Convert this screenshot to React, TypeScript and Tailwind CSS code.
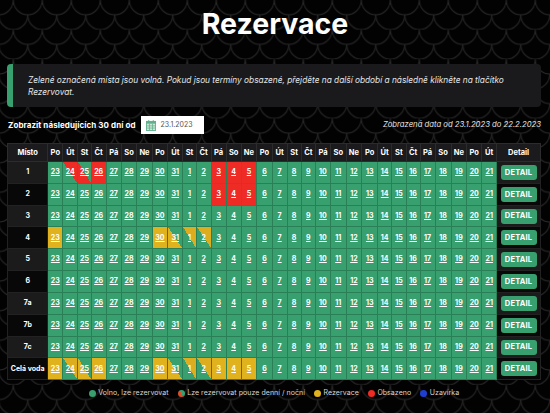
const dayNames = ["Po", "Út", "St", "Čt", "Pá", "So", "Ne"];
const days = [
	23, 24, 25, 26, 27, 28, 29, 30, 31, 1, 2, 3, 4, 5, 6, 7, 8, 9, 10, 11, 12, 13,
	14, 15, 16, 17, 18, 19, 20, 21,
];

const cellStyles: { [key: string]: string } = {
	free: "bg-[#38a06f]",
	gold: "bg-[#e0b21e]",
	red: "bg-[#ee2b24]",
	goldUp: "bg-[linear-gradient(to_top_right,#38a06f_50%,#dcae1f_50%)]",
	goldDown: "bg-[linear-gradient(to_bottom_left,#38a06f_50%,#e0b21e_50%)]",
	redUp: "bg-[linear-gradient(to_top_right,#38a06f_50%,#ee2b24_50%)]",
	redDown: "bg-[linear-gradient(to_bottom_left,#38a06f_50%,#ee2b24_50%)]",
};

const rows: { name: string; taken: { [day: number]: string } }[] = [
	{
		name: "1",
		taken: { 24: "redUp", 25: "redDown", 26: "red", 3: "red", 4: "red", 5: "red" },
	},
	{ name: "2", taken: { 3: "red", 4: "red", 5: "red" } },
	{ name: "3", taken: {} },
	{
		name: "4",
		taken: { 23: "gold", 30: "gold", 31: "goldDown", 1: "goldUp", 2: "goldUp" },
	},
	{ name: "5", taken: {} },
	{ name: "6", taken: {} },
	{ name: "7a", taken: {} },
	{ name: "7b", taken: {} },
	{ name: "7c", taken: {} },
	{
		name: "Celá voda",
		taken: {
			23: "gold",
			24: "goldUp",
			25: "goldDown",
			26: "gold",
			30: "gold",
			31: "goldDown",
			1: "goldUp",
			2: "goldUp",
			3: "gold",
			4: "gold",
			5: "gold",
		},
	},
];

const Scales = () => (
	<svg className="absolute inset-0 w-full h-full" aria-hidden="true">
		<defs>
			<pattern
				id="scales"
				x="13.3"
				y="0"
				width="29"
				height="29.6"
				patternUnits="userSpaceOnUse"
			>
				<g fill="none" stroke="#2a2a2a" strokeWidth="1">
					<path d="M0 0A14.5 14.8 0 0 0 29 0" />
					<path d="M-14.5 14.8A14.5 14.8 0 0 0 14.5 14.8" />
					<path d="M14.5 14.8A14.5 14.8 0 0 0 43.5 14.8" />
				</g>
			</pattern>
		</defs>
		<rect width="100%" height="100%" fill="url(#scales)" />
	</svg>
);

const CalendarIcon = () => (
	<svg width="10" height="11" viewBox="0 0 11 12" aria-hidden="true">
		<rect x="0.5" y="1.5" width="10" height="10" fill="#cfe8da" stroke="#5fb08a" />
		<rect x="0.5" y="1.5" width="10" height="2.5" fill="#5fb08a" />
		<path d="M3.8 4v7M7.2 4v7M1 6.4h9M1 8.8h9" stroke="#5fb08a" strokeWidth="0.8" />
		<path d="M3 0v2M8 0v2" stroke="#5fb08a" />
	</svg>
);

const LegendItem = ({ dot, label }: { dot: string; label: string }) => (
	<div className="flex items-center gap-[2.5px]">
		<span className={`w-[7px] h-[7px] rounded-full ${dot}`} />
		<span>{label}</span>
	</div>
);

const App = () => {
	return (
		<div className="relative w-[550px] h-[413px] overflow-hidden bg-[#020202] text-white font-['Inter','Liberation_Sans',sans-serif]">
			<Scales />
			<div className="relative px-[7px] w-[548px]">
				<h1 className="h-[64px] flex items-center justify-center pl-[2px] pb-[16px] text-[28.5px] font-bold">
					Rezervace
				</h1>

				<div className="h-[43px] flex items-center pl-[15px] pr-4 rounded-[4px] border-l-[6px] border-[#38a06f] bg-[#1a1a1c] text-[8.3px] leading-[12px] italic text-[#e4e4e4]">
					<p>
						Zelené označená místa jsou volná. Pokud jsou termíny obsazené,
						přejděte na další období a následně klikněte na tlačítko Rezervovat.
					</p>
				</div>

				<div className="h-[36px] flex items-center justify-between">
					<div className="flex items-center gap-[5px] pl-px">
						<span className="text-[8px] font-bold tracking-[0.08px]">
							Zobrazit následujících 30 dní od
						</span>
						<div className="w-[63px] h-[18px] flex items-center gap-[5px] pl-[5px] bg-white text-[#555] text-[7px]">
							<CalendarIcon />
							<span>23.1.2023</span>
						</div>
					</div>
					<span className="text-[7.7px] italic text-[#e4e4e4]">
						Zobrazená data od 23.1.2023 do 22.2.2023
					</span>
				</div>

				<div className="grid grid-cols-[41.3px_15px_15px_13.4px_15px_15px_15.6px_15.4px_15.6px_15px_13.4px_15px_15px_15px_15.6px_15.4px_15px_14px_14.3px_15px_15.7px_15.6px_16px_14px_14.4px_14px_15px_16px_15.6px_15px_15px_43.7px] grid-rows-[19px] auto-rows-[21.83px] w-[534px]">
					<div className="flex items-center justify-center bg-[#1b1b1d] border border-[#2c2c2c] text-[7.5px] font-bold">
						Místo
					</div>
					{days.map((day, i) => (
						<div
							key={day}
							className="flex items-center justify-center bg-[#1b1b1d] border-y border-r border-[#2c2c2c] text-[7.5px] font-bold"
						>
							{dayNames[i % 7]}
						</div>
					))}
					<div className="flex items-center justify-center bg-[#1b1b1d] border-y border-r border-[#2c2c2c] text-[7.5px] font-bold">
						Detail
					</div>

					{rows.map((row, r) => {
						const stripe = r % 2 === 0 ? "bg-[#1b1b1b]" : "bg-[#080808]";
						return [
							<div
								key={row.name}
								className={`flex items-center justify-center border-x border-b border-[#222] text-[7px] font-bold whitespace-nowrap ${stripe}`}
							>
								{row.name}
							</div>,
							...days.map((day) => (
								<div
									key={`${row.name}-${day}`}
									className={`flex items-center justify-center border-r border-b border-[#2b7f57] text-[7px] font-bold underline underline-offset-1 ${
										cellStyles[row.taken[day] ?? "free"]
									}`}
								>
									{day}
								</div>
							)),
							<div
								key={`${row.name}-detail`}
								className={`flex items-center justify-center border-r border-b border-[#222] ${stripe}`}
							>
								<button className="w-[36px] h-[15px] rounded-[3px] bg-[#38a06f] text-[7.5px] font-bold tracking-[0.2px]">
									DETAIL
								</button>
							</div>,
						];
					})}
				</div>

				<div className="h-[26px] flex items-center justify-center gap-[9px] text-[7px] text-[#d8d8d8] tracking-[0.05px]">
					<LegendItem dot="bg-[#38a06f]" label="Volno, lze rezervovat" />
					<LegendItem
						dot="bg-[linear-gradient(to_top_right,#d8502a_50%,#38a06f_50%)]"
						label="Lze rezervovat pouze denní / noční"
					/>
					<LegendItem dot="bg-[#e0b21e]" label="Rezervace" />
					<LegendItem dot="bg-[#ee2b24]" label="Obsazeno" />
					<LegendItem dot="bg-[#1f3fd0]" label="Uzavírka" />
				</div>
			</div>
		</div>
	);
};

export default App;
